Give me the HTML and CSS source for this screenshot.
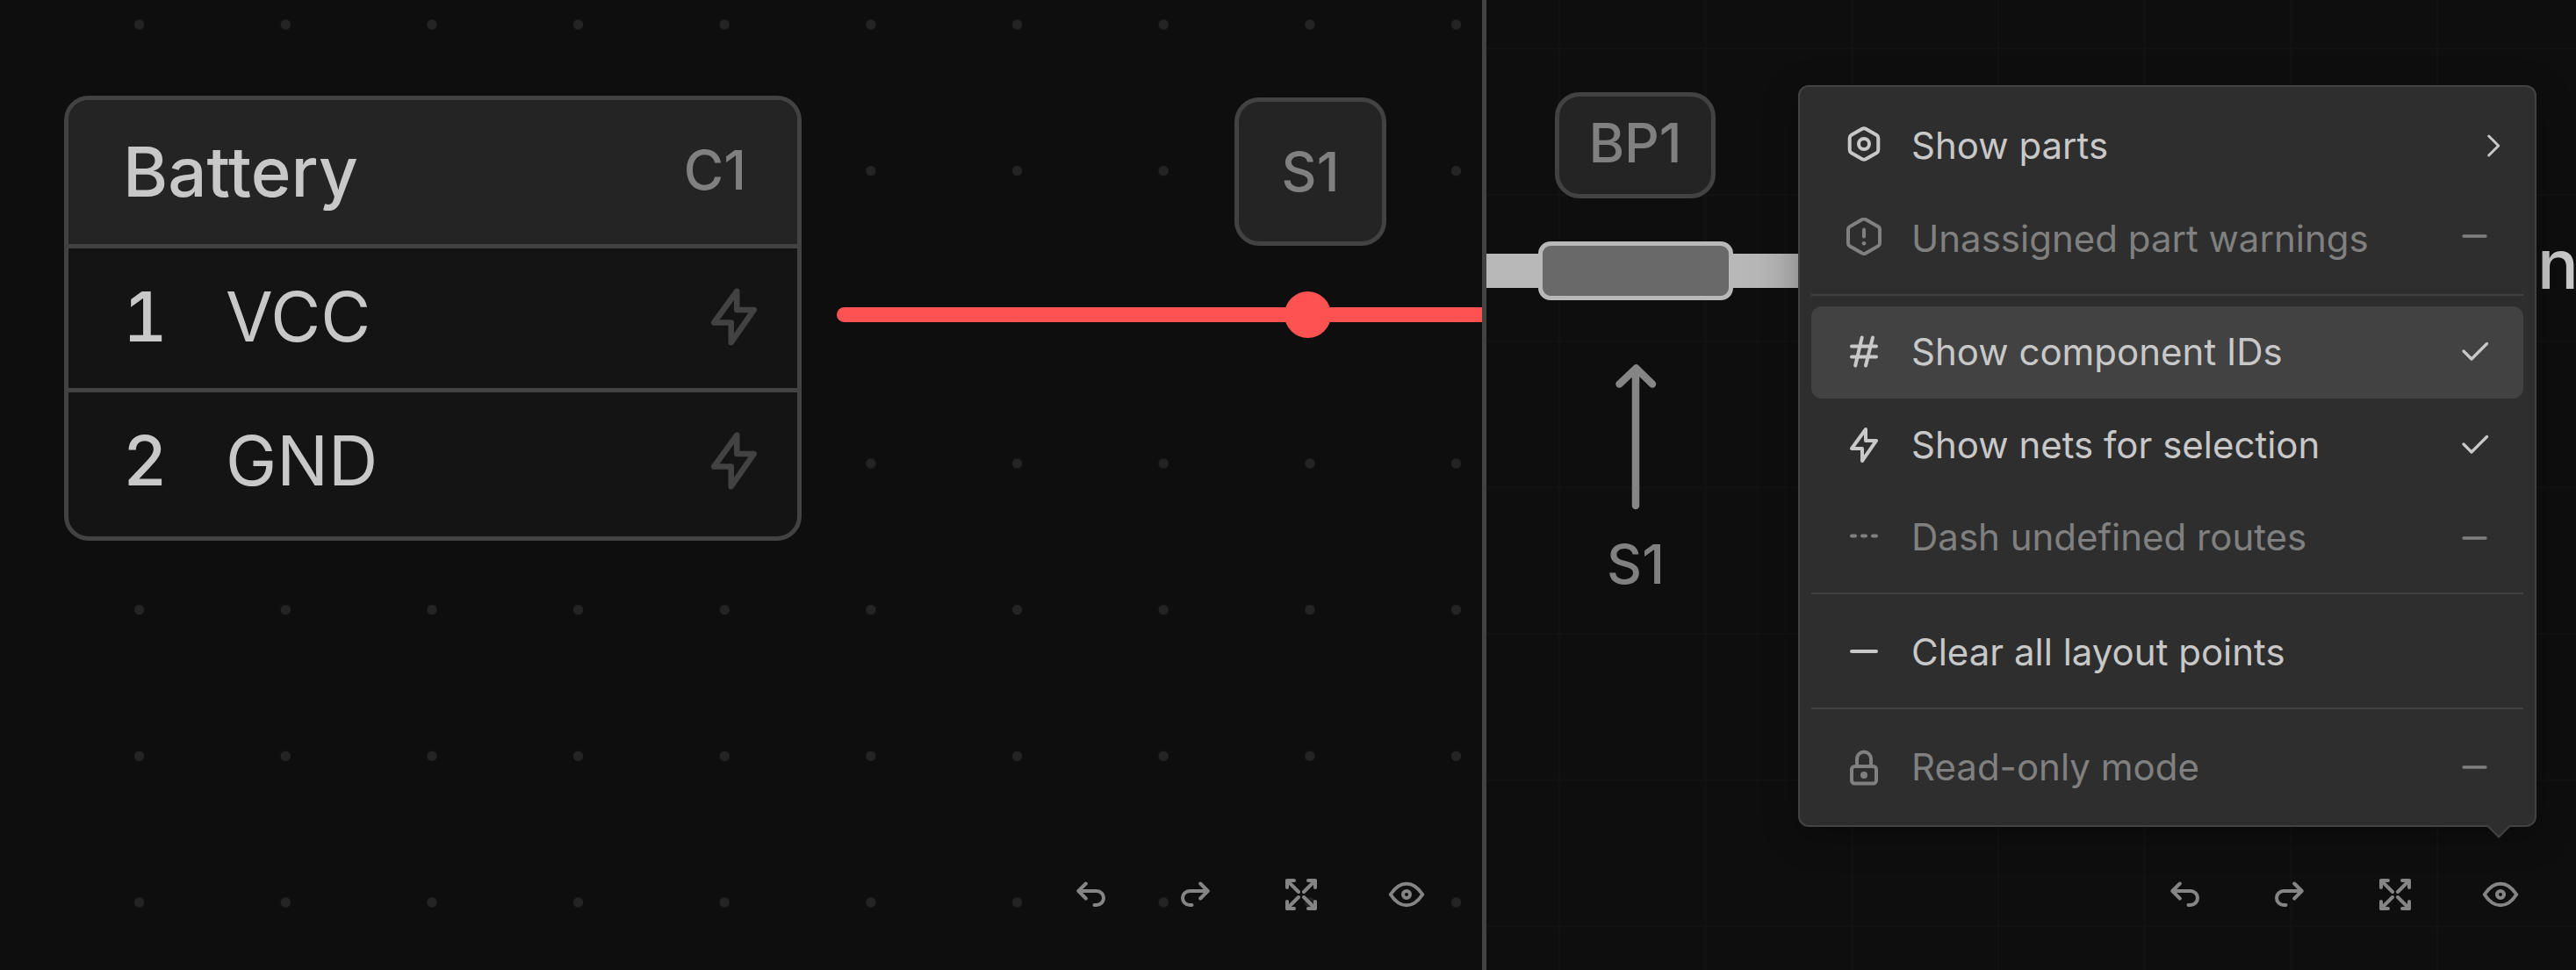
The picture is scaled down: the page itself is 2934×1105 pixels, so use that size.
FILE: index.html
```html
<!DOCTYPE html>
<html lang="en">
<head>
    <meta charset="UTF-8">
    <meta name="viewport" content="width=device-width, initial-scale=1.0">
    <title>Harness Editor</title>
    <link rel="stylesheet" href="styles.css">
</head>
<body>

<!-- Shared icons -->
<svg class="icon-defs" width="0" height="0">
    <symbol id="icon-bolt" viewBox="-24 -24 48 48">
        <path d="M2 -18 L-14 4 H-2 V18 L14 -5 H2 Z"/>
    </symbol>
    <symbol id="icon-undo" viewBox="-24 -24 48 48">
        <path d="M-5.200 -12.500 L-13.700 -4 L-5.200 4.500 M-13.500 -4 H7 A8 8 0 0 1 7 12 H4.500"/>
    </symbol>
    <symbol id="icon-expand" viewBox="-24 -24 48 48">
        <path d="M-3 -3 L-16 -16 M-16 -8 V-16 H-8 M3 -3 L16 -16 M16 -8 V-16 H8 M-3 3 L-16 16 M-16 8 V16 H-8 M3 3 L16 16 M16 8 V16 H8"/>
    </symbol>
    <symbol id="icon-eye" viewBox="-24 -24 48 48">
        <path d="M-18.200 0 C-13 -8 -7 -12.300 0 -12.300 C7 -12.300 13 -8 18.200 0 C13 8 7 12.300 0 12.300 C-7 12.300 -13 8 -18.200 0 Z"/>
        <circle r="4"/>
    </symbol>
    <symbol id="icon-check" viewBox="-24 -24 48 48">
        <path d="M-13 -1 L-4 8 L13.500 -9.500"/>
    </symbol>
    <symbol id="icon-minus" viewBox="-24 -24 48 48">
        <path d="M-13 0 H12"/>
    </symbol>
</svg>

<div class="workspace">
    <!-- Schematic -->
    <div class="pane schematic">
        <div class="component">
            <div class="component-header">
                <h2>Battery</h2>
                <span class="component-id">C1</span>
            </div>
            <div class="pin">
                <strong>1</strong>
                <span>VCC</span>
                <svg class="pin-icon"><use href="#icon-bolt"/></svg>
            </div>
            <div class="pin">
                <strong>2</strong>
                <span>GND</span>
                <svg class="pin-icon"><use href="#icon-bolt"/></svg>
            </div>
        </div>
        <div class="badge splice-badge">S1</div>
        <div class="wire"></div>
        <div class="splice"></div>

        <div class="toolbar">
            <button><svg><use href="#icon-undo"/></svg></button>
            <button><svg class="flip"><use href="#icon-undo"/></svg></button>
            <button><svg><use href="#icon-expand"/></svg></button>
            <button><svg><use href="#icon-eye"/></svg></button>
        </div>
    </div>

    <!-- Layout -->
    <div class="pane layout">
        <div class="badge bundle-badge">BP1</div>
        <div class="bundle"></div>
        <div class="bundle-part"></div>
        <svg class="arrow" width="50" height="176" viewBox="0 0 50 176">
            <path d="M25 167 V12 M6.500 28.500 L25.500 10.500 L44 28.500"/>
        </svg>
        <div class="arrow-label">S1</div>
        <div class="node-name">n</div>

        <div class="toolbar">
            <button><svg><use href="#icon-undo"/></svg></button>
            <button><svg class="flip"><use href="#icon-undo"/></svg></button>
            <button><svg><use href="#icon-expand"/></svg></button>
            <button><svg><use href="#icon-eye"/></svg></button>
        </div>

        <!-- View options menu -->
        <div class="menu">
            <div class="menu-item">
                <svg class="menu-icon" viewBox="-24 -24 48 48">
                    <path d="M-2 -20.200 Q0 -21.300 2 -20.200 L14.300 -13.200 Q16.300 -12 16.300 -9.800 V3.800 Q16.300 6 14.300 7.200 L2 14.200 Q0 15.300 -2 14.200 L-14.300 7.200 Q-16.300 6 -16.300 3.800 V-9.800 Q-16.300 -12 -14.300 -13.200 Z"/>
                    <circle cy="-3" r="6"/>
                </svg>
                <span>Show parts</span>
                <svg class="menu-mark chevron" viewBox="-24 -24 48 48"><path d="M-5.300 -12 L5.700 -1 L-5.300 10"/></svg>
            </div>
            <div class="menu-item disabled">
                <svg class="menu-icon" viewBox="-24 -24 48 48">
                    <path d="M-2 -22 Q0 -23.200 2 -22 L16 -13.900 Q18 -12.700 18 -10.500 V5 Q18 7.200 16 8.400 L2 16.500 Q0 17.600 -2 16.500 L-16 8.400 Q-18 7.200 -18 5 V-10.500 Q-18 -12.700 -16 -13.900 Z"/>
                    <path d="M0 -10.500 V-2.500"/>
                    <circle class="solid" cy="5.200" r="2.300"/>
                </svg>
                <span>Unassigned part warnings</span>
                <svg class="menu-mark raised"><use href="#icon-minus"/></svg>
            </div>
            <hr class="tight">
            <div class="menu-item active">
                <svg class="menu-icon" viewBox="-24 -24 48 48">
                    <path d="M-14 -6.500 H14 M-14 5.500 H14 M-2.300 -16.500 L-9.800 15.500 M10 -16.500 L2 15.500"/>
                </svg>
                <span>Show component IDs</span>
                <svg class="menu-mark"><use href="#icon-check"/></svg>
            </div>
            <div class="menu-item">
                <svg class="menu-icon"><use href="#icon-bolt"/></svg>
                <span>Show nets for selection</span>
                <svg class="menu-mark"><use href="#icon-check"/></svg>
            </div>
            <div class="menu-item disabled">
                <svg class="menu-icon" viewBox="-24 -24 48 48">
                    <path d="M-14 -2.500 H-10 M-2 -2.500 H2 M10 -2.500 H14"/>
                </svg>
                <span>Dash undefined routes</span>
                <svg class="menu-mark"><use href="#icon-minus"/></svg>
            </div>
            <hr>
            <div class="menu-item">
                <svg class="menu-icon" viewBox="-24 -24 48 48">
                    <path d="M-14 -1 H14"/>
                </svg>
                <span>Clear all layout points</span>
            </div>
            <hr>
            <div class="menu-item disabled">
                <svg class="menu-icon" viewBox="-24 -24 48 48">
                    <rect x="-14" y="-1" width="28" height="19.500" rx="3.500"/>
                    <path d="M-8 -1 V-9.500 A8 8 0 0 1 8 -9.500 V-1"/>
                    <circle class="solid" cy="9" r="4"/>
                </svg>
                <span>Read-only mode</span>
                <svg class="menu-mark"><use href="#icon-minus"/></svg>
            </div>
            <svg class="menu-caret" width="30" height="16" viewBox="0 0 30 16">
                <path d="M1.500 0 L15 13.500 L28.500 0"/>
            </svg>
        </div>
    </div>
</div>

</body>
</html>
```
FILE: styles.css
```css
body {
    margin: 0;
    background-color: #0e0e0e;
    color: #c8c8c8;
    font-family: 'Inter', sans-serif;
    overflow: hidden;
}

svg {
    fill: none;
    stroke: currentColor;
    stroke-width: 4;
    stroke-linecap: round;
    stroke-linejoin: round;
}

.icon-defs {
    position: absolute;
}

.solid {
    fill: currentColor;
    stroke: none;
}

.workspace {
    display: flex;
    height: 1105px;
}

.pane {
    position: relative;
    overflow: hidden;
    display: flex;
    justify-content: flex-end;
    align-items: flex-end;
}

/* Schematic pane */
.schematic {
    width: 1688px;
    background-image: radial-gradient(circle, #242424 5.3px, transparent 6px);
    background-size: 166.67px 166.67px;
    background-position: 75.3px -55.3px;
}

.component {
    position: absolute;
    left: 73px;
    top: 109px;
    box-sizing: border-box;
    width: 840px;
    height: 507px;
    border: 5px solid #424242;
    border-radius: 28px;
    background-color: #141414;
    overflow: hidden;
}

.component-header {
    display: flex;
    justify-content: space-between;
    align-items: center;
    box-sizing: border-box;
    height: 164px;
    padding: 0 58px 2px 62px;
    background-color: #242424;
}

.component-header h2 {
    margin: 0;
    font-size: 78px;
    font-weight: 500;
}

.component-id {
    padding-bottom: 4px;
    font-size: 62px;
    font-weight: 500;
    color: #808080;
}

.pin {
    display: flex;
    align-items: center;
    height: 155px;
    padding: 0 33px 4px 62px;
    border-top: 5px solid #424242;
    font-size: 78px;
}

.pin strong {
    width: 117px;
    font-weight: 500;
    font-variant-numeric: tabular-nums;
}

.pin-icon {
    width: 78px;
    height: 78px;
    margin-left: auto;
    color: #424242;
}

.badge {
    position: absolute;
    box-sizing: border-box;
    display: flex;
    justify-content: center;
    align-items: center;
    border: 5px solid #424242;
    border-radius: 28px;
    background-color: #242424;
    color: #808080;
    font-size: 62px;
    font-weight: 500;
}

.splice-badge {
    left: 1406px;
    top: 111px;
    width: 173px;
    height: 169px;
}

.wire {
    position: absolute;
    left: 953px;
    top: 350px;
    width: 750px;
    height: 17px;
    border-radius: 9px;
    background-color: #fc5252;
}

.splice {
    position: absolute;
    left: 1463px;
    top: 332px;
    width: 53px;
    height: 53px;
    border-radius: 50%;
    background-color: #fc5252;
}

/* Layout pane */
.layout {
    flex: 1;
    border-left: 5px solid #424242;
    background-image:
        linear-gradient(to right, #121212 2px, transparent 2px),
        linear-gradient(to bottom, #121212 2px, transparent 2px);
    background-size: 166.67px 166.67px;
    background-position: 82px 0, 0 54.500px;
}

.bundle-badge {
    left: 78px;
    top: 105px;
    width: 183px;
    height: 121px;
    padding-bottom: 6px;
}

.bundle {
    position: absolute;
    left: 0;
    top: 289px;
    width: 380px;
    height: 39px;
    background: linear-gradient(to right, #b8b8b8 290px, #afafaf 356px);
}

.bundle-part {
    position: absolute;
    left: 59px;
    top: 275px;
    box-sizing: border-box;
    width: 222px;
    height: 67px;
    border: 5px solid #b8b8b8;
    border-radius: 14px;
    background-color: #696969;
}

.arrow {
    position: absolute;
    left: 145px;
    top: 409px;
    color: #858585;
    stroke-width: 8.5;
}

.arrow-label {
    position: absolute;
    left: 100px;
    top: 605px;
    width: 140px;
    text-align: center;
    font-size: 62px;
    font-weight: 500;
    color: #808080;
}

.node-name {
    position: absolute;
    left: 1197px;
    top: 253px;
    font-size: 78px;
    font-weight: 500;
}

/* Toolbar */
.toolbar {
    display: flex;
    padding: 0 26px 26px 0;
}

.toolbar button {
    display: flex;
    justify-content: center;
    align-items: center;
    width: 120px;
    height: 120px;
    padding: 0;
    border: none;
    background: none;
    color: #858585;
    cursor: pointer;
}

.toolbar svg {
    width: 48px;
    height: 48px;
}

.toolbar .flip {
    transform: scaleX(-1);
}

/* View options menu */
.menu {
    position: absolute;
    left: 355px;
    top: 97px;
    box-sizing: border-box;
    width: 841px;
    height: 845px;
    padding: 15px 13px 0;
    border: 2px solid #424242;
    border-radius: 12px;
    background-color: #2e2e2e;
    box-shadow: 0 10px 40px rgba(0, 0, 0, 0.25);
}

.menu-item {
    display: flex;
    align-items: center;
    box-sizing: border-box;
    height: 105.6px;
    padding: 0 31px 0 36px;
    border-radius: 12px;
    font-size: 42px;
}

.menu-item span {
    flex: 1;
    padding: 0 0 2px 30px;
}

.menu-item.active {
    background-color: #424242;
}

.menu-item.disabled {
    color: #808080;
}

.menu-icon,
.menu-mark {
    width: 48px;
    height: 48px;
}

.menu-mark {
    stroke-width: 3.3;
}

.menu-mark.raised {
    margin-bottom: 6px;
}

.menu-mark.chevron {
    margin-right: -21px;
    stroke-width: 3;
}

.menu hr {
    height: 2px;
    margin: 10px 0 13.200px;
    border: none;
    background-color: #424242;
}

.menu hr.tight {
    margin-bottom: 11.500px;
}

.menu-caret {
    position: absolute;
    right: 26px;
    bottom: -16px;
    fill: #2e2e2e;
    stroke: #424242;
    stroke-width: 2;
    stroke-linecap: butt;
}
```
